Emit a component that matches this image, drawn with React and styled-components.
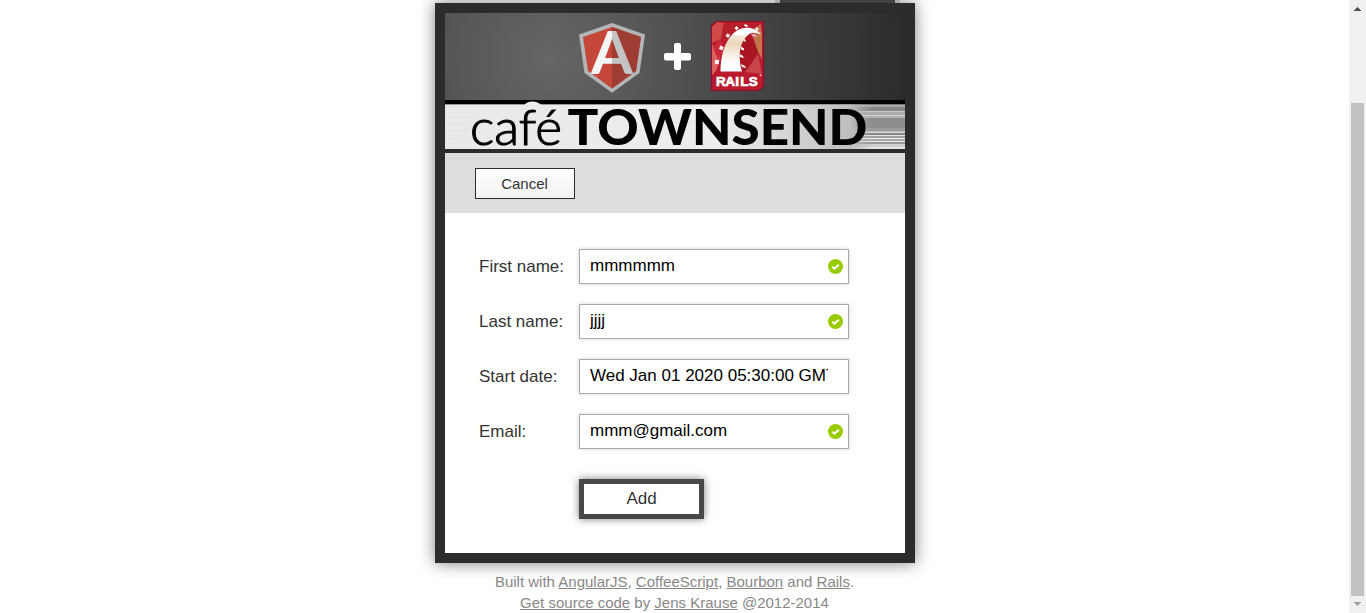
import React from "react";
import styled, { createGlobalStyle } from "styled-components";

const Global = createGlobalStyle`
  * { box-sizing: border-box; }
  html, body { margin: 0; height: 613px; overflow: hidden; background: #fff; }
  body { font-family: "Liberation Sans", Arial, sans-serif; color: #333; }
`;

const Window = styled.div`
  display: flex;
  width: 1366px;
  height: 613px;
  overflow: hidden;
`;

const Page = styled.main`
  width: 1349px;
  padding-left: 1px;
  display: flex;
  flex-direction: column;
  align-items: center;
`;

const TopStrip = styled.div`
  width: 480px;
  height: 3px;
  flex: none;
  display: flex;
  justify-content: flex-end;
  padding-right: 15px;
`;

const TopTab = styled.div`
  width: 125px;
  height: 3px;
  background: #555;
  border: solid #d8d8d8;
  border-width: 0 5px;
`;

const Card = styled.section`
  width: 480px;
  height: 560px;
  flex: none;
  border: 10px solid #2c2c2c;
  background: #fff;
  box-shadow: 0 0 15px rgba(0, 0, 0, 0.5);
`;

const Header = styled.header`
  height: 87px;
  background: radial-gradient(circle 420px at 105px 45px, #666 0, #2c2c2c 85%);
  svg { display: block; }
`;

const Banner = styled.div`
  height: 53px;
  svg { display: block; overflow: visible; }
`;

const Toolbar = styled.nav`
  height: 60px;
  padding: 15px 30px;
  background: #ddd;
`;

const CancelButton = styled.button`
  display: block;
  width: 100px;
  height: 31px;
  padding: 0 1px 0 0;
  border: 1px solid #2c2c2c;
  background: linear-gradient(#fff, #f2f2f2);
  color: #333;
  font: 15px/29px "Liberation Sans", Arial, sans-serif;
`;

const Form = styled.form`
  padding: 36px 56px 0 34px;
  display: flex;
  flex-direction: column;
  gap: 20px;
`;

const Row = styled.label`
  display: flex;
  height: 35px;
  font-size: 17px;
  line-height: 35px;
`;

const Caption = styled.span`
  width: 100px;
  flex: none;
`;

const Field = styled.span`
  width: 270px;
  height: 35px;
  display: flex;
  align-items: center;
  justify-content: space-between;
  padding: 0 5px 0 10px;
  border: 1px solid #aaa;
  box-shadow: 0 0 4px rgba(0, 0, 0, 0.18);
`;

const Value = styled.span`
  width: 238px;
  overflow: hidden;
  white-space: nowrap;
  color: #000;
  line-height: 31px;
  padding-bottom: 2px;
`;

const Tick = styled.svg`
  width: 15px;
  height: 15px;
  flex: none;
`;

const AddButton = styled.button`
  width: 125px;
  height: 40px;
  margin: 10px 0 0 100px;
  padding: 0;
  border: 5px solid #484848;
  background: #fff;
  color: #333;
  box-shadow: 0 0 8px rgba(0, 0, 0, 0.5);
  font: 17px/28px "Liberation Sans", Arial, sans-serif;
`;

const Footer = styled.footer`
  margin-top: 8px;
  padding-right: 1px;
  text-align: center;
  color: #888;
  font-size: 15px;
  line-height: 21px;
  white-space: nowrap;
`;

const Link = styled.a`
  text-decoration: underline;
`;

const Scrollbar = styled.aside`
  width: 17px;
  height: 613px;
  flex: none;
  background: #f0f0f0;
  display: flex;
  flex-direction: column;
  align-items: center;
  svg { display: block; }
`;

const Track = styled.div`
  width: 13px;
  height: 579px;
  padding-top: 86px;
`;

const Thumb = styled.div`
  height: 493px;
  background: #c1c1c1;
`;

function HeaderArt() {
  return (
    <svg width="460" height="87" viewBox="445 13 460 87">
      <defs>
        <linearGradient id="aTone" gradientUnits="userSpaceOnUse" x1="590" y1="0" x2="634" y2="0">
          <stop offset=".5" stopColor="#f4f4f4" />
          <stop offset=".5" stopColor="#c4c4c4" />
        </linearGradient>
        <linearGradient id="rail" x1="0" y1="0" x2="0" y2="1">
          <stop offset="0" stopColor="#fff" />
          <stop offset=".35" stopColor="#ecd6bb" />
          <stop offset=".8" stopColor="#fff" />
        </linearGradient>
      </defs>
      <path d="M612 23 645 34.5 639.5 73 612 92.7 584.5 73 579 34.5Z" fill="#b3b5b6" />
      <path d="M612 27 641 37 636 71 612 88.5 588 71 583 37Z" fill="#c4473a" />
      <path d="M612 27 641 37 636 71 612 88.5Z" fill="#9d3d34" />
      <text
        x="591"
        y="74"
        fontFamily="Lato, sans-serif"
        fontWeight="700"
        fontSize="60"
        textLength="42"
        lengthAdjust="spacingAndGlyphs"
        fill="url(#aTone)"
      >A</text>
      <rect x="664" y="53" width="27" height="7.5" rx="2" fill="#fff" />
      <rect x="674" y="43" width="7" height="27" rx="2" fill="#fff" />

      <path d="M716 21.500H763.500V86L759 90.500H711.500V26Z" fill="#b91a2e" stroke="#8c0d2c" strokeWidth="1.200" />
      <path d="M712 27 717 22 724 23 721 39 712 43Z" fill="#d04a48" />
      <path d="M724 22 755 22 740 29 727 41 721 39Z" fill="#b62028" />
      <path d="M712 44 720 58 716 71 712 75Z" fill="#dc625c" />
      <path d="M720 39 724 50 718 60 713 47Z" fill="#c92b38" />
      <path d="M761 24 762 53 757 36 750 31Z" fill="#c56c52" />
      <path d="M740 43 749 33 759 52 750 71 740 72Z" fill="#a91622" />
      <path d="M753 37 762 31 762 59 758 52Z" fill="#c17548" />
      <path d="M745 72 758 54 762 74Z" fill="#c74448" />
      <path d="M720.500 71.500C720.500 57 724 44 731 36 740 26 753 25 761 34.500 755 31.500 750 32 746 37 739 45 738 58 742 71.500Z" fill="url(#rail)" />
      <path d="M732 35C740 26 753 25 761 34.500 755 31.500 750 31.500 746 35Z" fill="#fff" />
      <path d="M751 34 755 34 757 37 753 37Z" fill="#dda4b4" />
      <g fill="#fff">
        <rect x="715" y="60" width="4" height="4" transform="rotate(8 717 62)" />
        <rect x="719.500" y="46" width="3.600" height="3.600" transform="rotate(22 721 48)" />
        <rect x="726.300" y="34" width="3.300" height="3.300" transform="rotate(38 728 35.500)" />
        <rect x="735.200" y="26.700" width="3" height="3" transform="rotate(45 736.700 28)" />
        <rect x="744.500" y="24.500" width="3.500" height="2" transform="rotate(25 746 25)" />
        <rect x="755.500" y="28" width="3" height="2" transform="rotate(35 757 29)" />
        <path d="m743.500 38.500 2 1.500 0 2-2-1zM741 46.500l3 2 0 2-3-1zM740 54l3 2 1 2-4-1zM741 64l4 2 1 2-4-1z" />
      </g>
      <text
        x="716 725.300 735.300 740.300 748.800"
        y="86"
        fontFamily='"Liberation Sans", Arial, sans-serif'
        fontWeight="700"
        fontSize="13.500"
        fill="#fff"
        stroke="#fff"
        strokeWidth=".7"
      >RAILS</text>
      <circle cx="760.500" cy="75.200" r="1" fill="#f5c6cb" />
    </svg>
  );
}

const streaks = [
  [104, 1, "#777"], [105, 2, "#aaa"], [107, 4, "#858585"], [111, 1, "#c8c8c8"],
  [112, 3, "#ababab"], [115, 1, "#d2d2d2"], [116, 2, "#b1b1b1"], [118, 10, "#8c8c8c"],
  [128, 3, "#999"], [131, 1, "#bbb"], [132, 1, "#ddd"], [133, 2, "#858585"],
  [135, 1, "#e4e4e4"], [136, 2, "#a0a0a0"], [138, 1, "#eee"], [139, 2, "#aaa"],
  [141, 1, "#eee"], [142, 2, "#989898"], [144, 3, "#d0d0d0"], [147, 2, "#e4e4e4"],
];

function BannerArt() {
  return (
    <svg width="460" height="53" viewBox="445 100 460 53">
      <defs>
        <linearGradient id="paper">
          <stop offset="0" stopColor="#e9e9e9" />
          <stop offset=".6" stopColor="#ededed" />
          <stop offset=".82" stopColor="#c9c9c9" />
          <stop offset="1" stopColor="#aaa" />
        </linearGradient>
        <linearGradient id="fade">
          <stop offset="0" stopColor="#fff" stopOpacity="0" />
          <stop offset=".4" stopColor="#fff" />
        </linearGradient>
        <mask id="streakMask"><rect x="850" y="100" width="55" height="53" fill="url(#fade)" /></mask>
      </defs>
      <rect x="445" y="100" width="460" height="53" fill="#2c2c2c" />
      <rect x="445" y="100" width="460" height="4" fill="#000" />
      <rect x="445" y="104" width="460" height="45" fill="url(#paper)" />
      <rect x="445" y="104" width="460" height="1" fill="#999" />
      <path d="M524 105.500C527 100 537 100 542 105.500Z" fill="#ececec" />
      <path d="M445 117.500h27M445 124.500h19M445 130.500h25M445 138.500h15" stroke="#e2e2e2" />
      <g mask="url(#streakMask)">
        {streaks.map(([y, h, c]) => <rect key={y} x="850" y={y} width="55" height={h} fill={c} />)}
      </g>
      <text
        x="470"
        y="145"
        fontFamily="Lato, sans-serif"
        fontWeight="300"
        fontSize="49"
        textLength="92"
        lengthAdjust="spacingAndGlyphs"
        fill="#000"
        stroke="#000"
        strokeWidth="1.100"
      >café</text>
      <text
        x="567.500"
        y="145"
        fontFamily="Lato, sans-serif"
        fontWeight="900"
        fontSize="48.500"
        textLength="300"
        lengthAdjust="spacingAndGlyphs"
        fill="#000"
      >TOWNSEND</text>
    </svg>
  );
}

function FormRow({ label, value, valid }) {
  return (
    <Row>
      <Caption>{label}</Caption>
      <Field>
        <Value>{value}</Value>
        {valid && (
          <Tick viewBox="0 0 15 15">
            <circle cx="7.500" cy="7.500" r="7.500" fill="#9c0" />
            <path d="m4.300 7.700 2.200 2 4.300-4" fill="none" stroke="#fff" strokeWidth="2" />
          </Tick>
        )}
      </Field>
    </Row>
  );
}

export default function App() {
  return (
    <Window>
      <Global />
      <Page>
        <TopStrip><TopTab /></TopStrip>
        <Card>
          <Header><HeaderArt /></Header>
          <Banner><BannerArt /></Banner>
          <Toolbar><CancelButton>Cancel</CancelButton></Toolbar>
          <Form>
            <FormRow label="First name:" value="mmmmmm" valid />
            <FormRow label="Last name:" value="jjjj" valid />
            <FormRow label="Start date:" value="Wed Jan 01 2020 05:30:00 GMT+0530" />
            <FormRow label="Email:" value="mmm@gmail.com" valid />
            <AddButton type="button">Add</AddButton>
          </Form>
        </Card>
        <Footer>
          <div>Built with <Link>AngularJS</Link>, <Link>CoffeeScript</Link>, <Link>Bourbon</Link> and <Link>Rails</Link>.</div>
          <div><Link>Get source code</Link> by <Link>Jens Krause</Link> @2012-2014</div>
        </Footer>
      </Page>
      <Scrollbar>
        <svg width="17" height="17" shapeRendering="crispEdges"><path d="M5 11h7v-1h-1v-1h-1v-1h-1v-1h-1v1h-1v1h-1v1h-1z" fill="#505050" /></svg>
        <Track><Thumb /></Track>
        <svg width="17" height="17" shapeRendering="crispEdges"><path d="M5 6h7v1h-1v1h-1v1h-1v1h-1v-1h-1v-1h-1v-1h-1z" fill="#a3a3a3" /></svg>
      </Scrollbar>
    </Window>
  );
}
